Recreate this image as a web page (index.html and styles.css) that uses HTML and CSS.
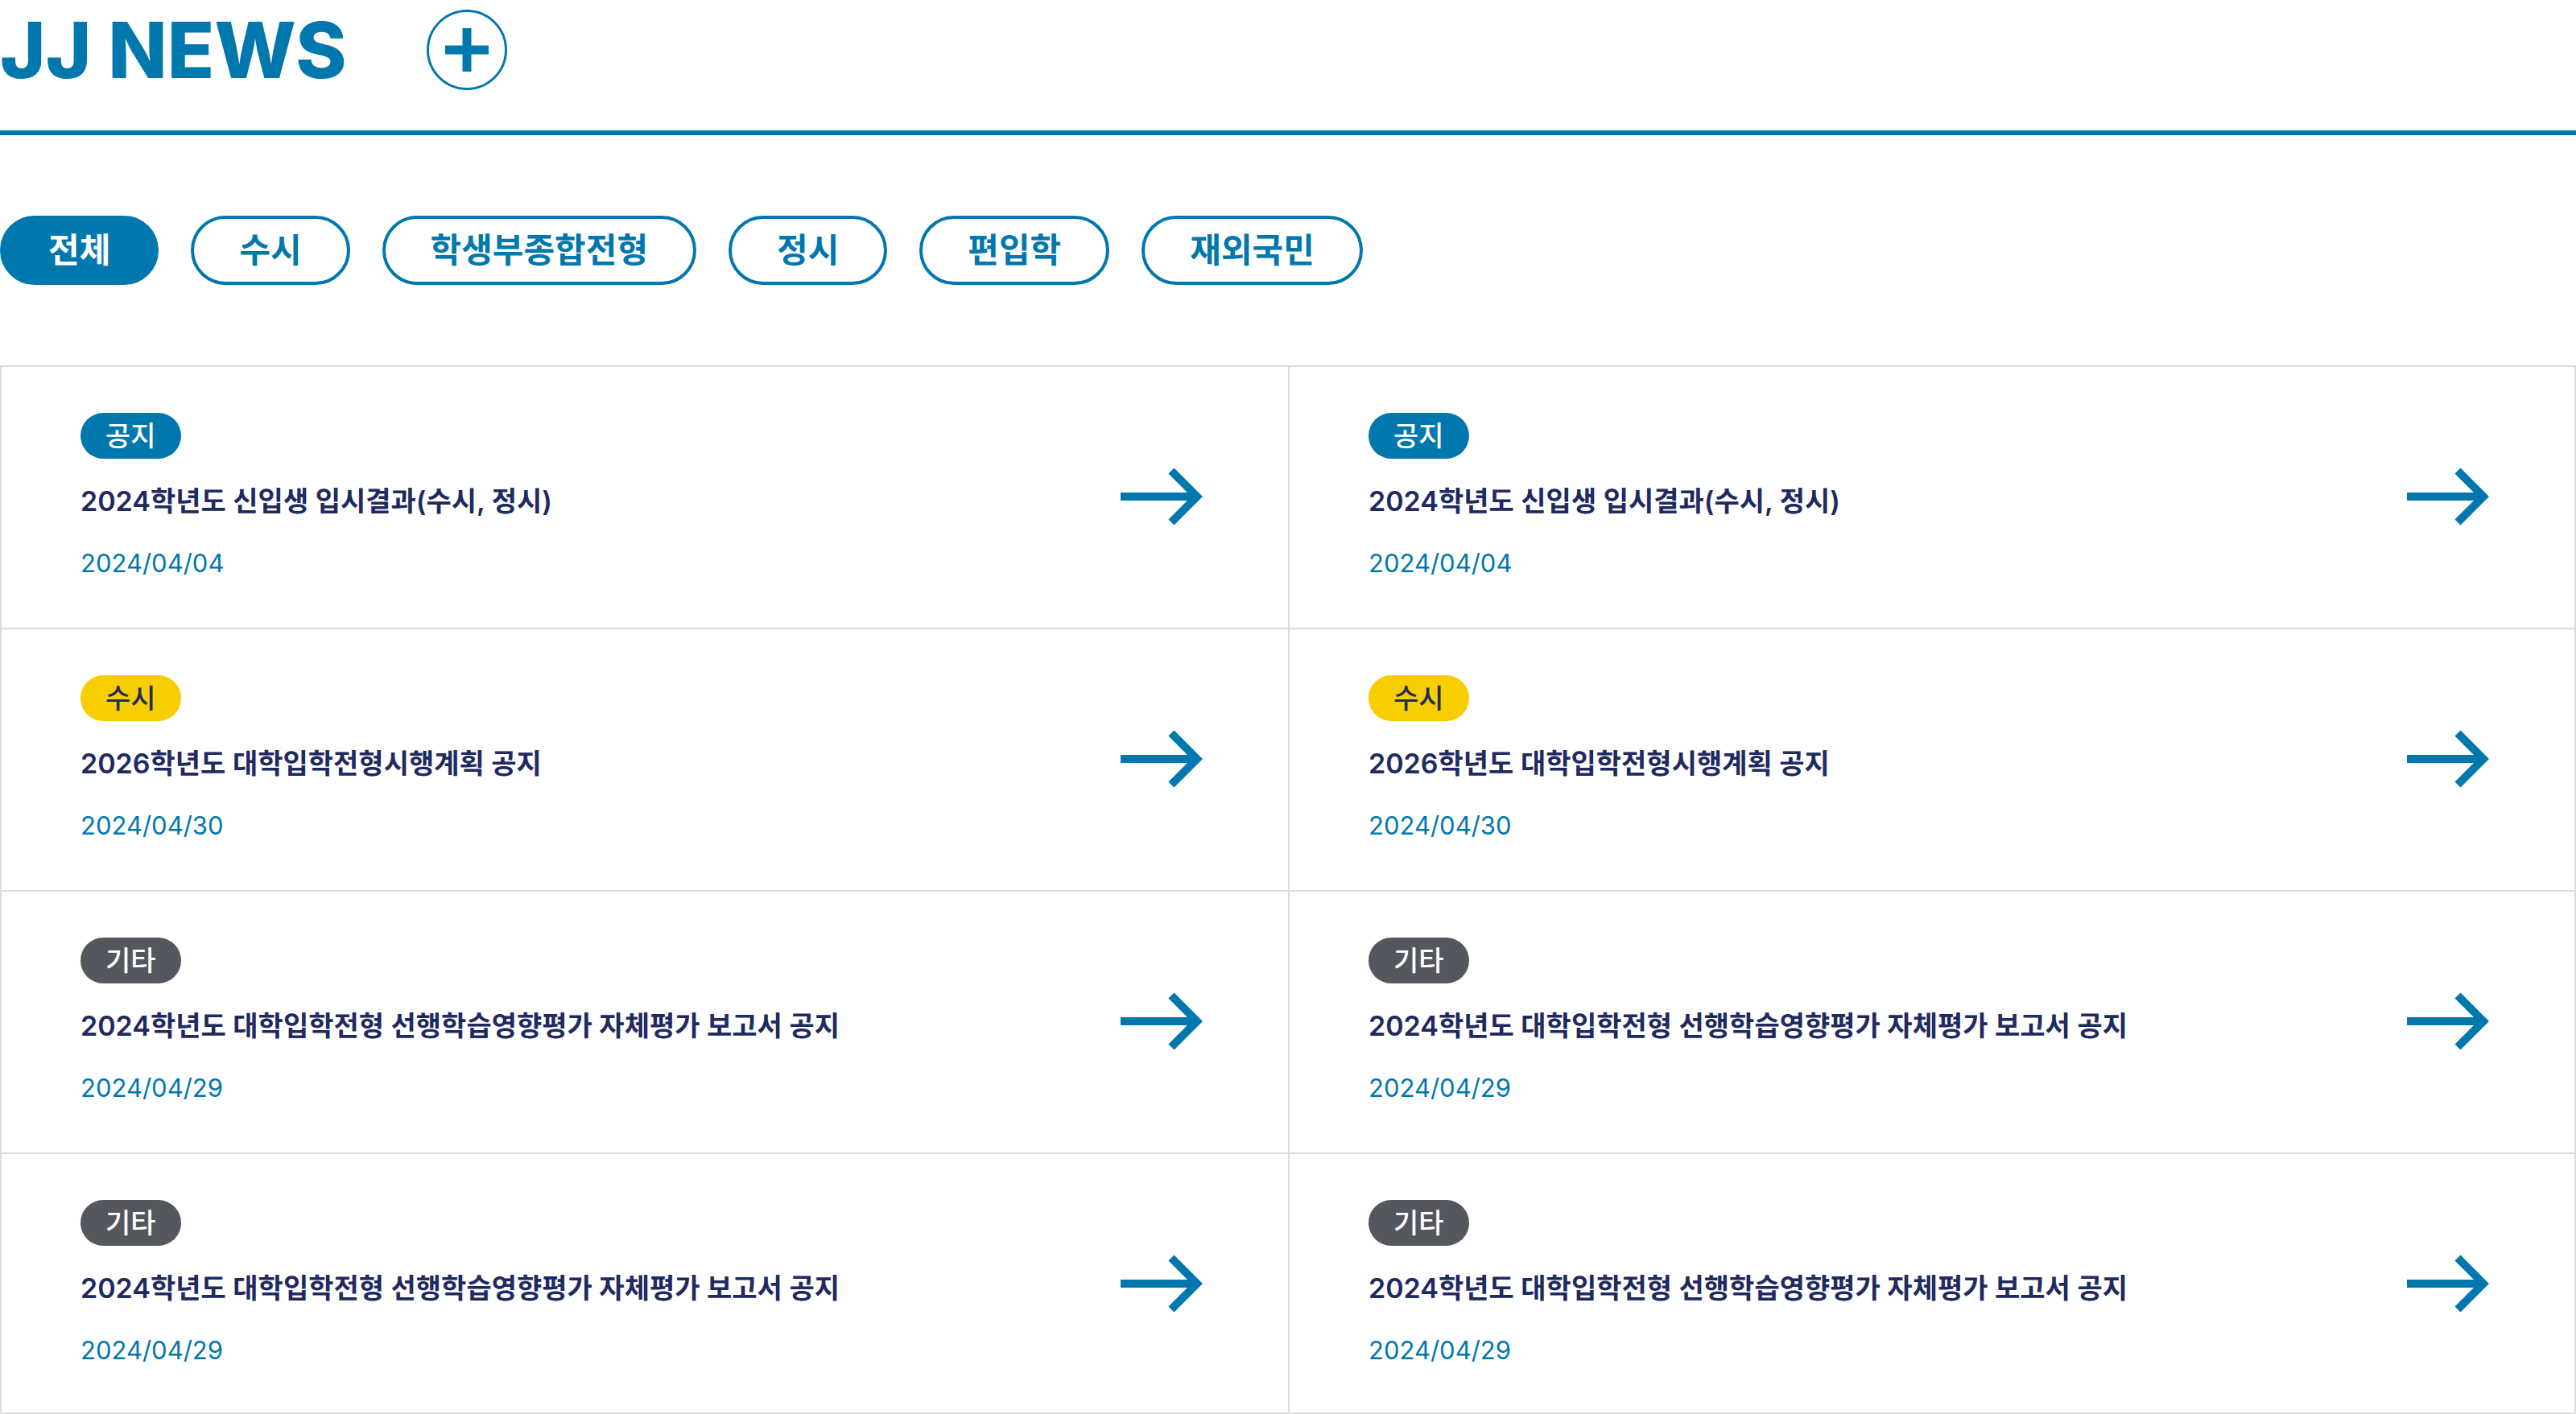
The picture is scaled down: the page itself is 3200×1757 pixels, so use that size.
FILE: index.html
```html
<!DOCTYPE html>
<html lang="ko">
<head>
<meta charset="utf-8">
<meta name="viewport" content="width=device-width, initial-scale=1">
<title>JJ NEWS</title>
<link rel="stylesheet" href="styles.css">
</head>
<body>
<svg class="sprite" aria-hidden="true">
  <symbol id="arrow" viewBox="0 0 102 72">
    <path d="M0 36H94M63 4L95 36L63 68" fill="none" stroke="currentColor" stroke-width="10"/>
  </symbol>
</svg>
<main class="news">
  <header class="news-header">
    <h1 class="news-title">JJ NEWS</h1>
    <a class="more" href="#" aria-label="더보기">
      <svg class="more-icon" viewBox="0 0 54 54" aria-hidden="true"><path d="M0 27H54M27 0V54" stroke="currentColor" stroke-width="11"/></svg>
    </a>
  </header>
  <nav class="tabs" aria-label="전형">
    <button class="tab tab-active" type="button">전체</button>
    <button class="tab" type="button">수시</button>
    <button class="tab" type="button">학생부종합전형</button>
    <button class="tab" type="button">정시</button>
    <button class="tab" type="button">편입학</button>
    <button class="tab" type="button">재외국민</button>
  </nav>
  <ul class="list">
    <li class="item"><a class="link" href="#"><span class="body"><span class="badge badge-notice">공지</span><strong class="subject">2024학년도 신입생 입시결과(수시, 정시)</strong><time class="date">2024/04/04</time></span><svg class="arrow" aria-hidden="true"><use href="#arrow"/></svg></a></li>
    <li class="item"><a class="link" href="#"><span class="body"><span class="badge badge-notice">공지</span><strong class="subject">2024학년도 신입생 입시결과(수시, 정시)</strong><time class="date">2024/04/04</time></span><svg class="arrow" aria-hidden="true"><use href="#arrow"/></svg></a></li>
    <li class="item"><a class="link" href="#"><span class="body"><span class="badge badge-early">수시</span><strong class="subject">2026학년도 대학입학전형시행계획 공지</strong><time class="date">2024/04/30</time></span><svg class="arrow" aria-hidden="true"><use href="#arrow"/></svg></a></li>
    <li class="item"><a class="link" href="#"><span class="body"><span class="badge badge-early">수시</span><strong class="subject">2026학년도 대학입학전형시행계획 공지</strong><time class="date">2024/04/30</time></span><svg class="arrow" aria-hidden="true"><use href="#arrow"/></svg></a></li>
    <li class="item"><a class="link" href="#"><span class="body"><span class="badge badge-etc">기타</span><strong class="subject">2024학년도 대학입학전형 선행학습영향평가 자체평가 보고서 공지</strong><time class="date">2024/04/29</time></span><svg class="arrow" aria-hidden="true"><use href="#arrow"/></svg></a></li>
    <li class="item"><a class="link" href="#"><span class="body"><span class="badge badge-etc">기타</span><strong class="subject">2024학년도 대학입학전형 선행학습영향평가 자체평가 보고서 공지</strong><time class="date">2024/04/29</time></span><svg class="arrow" aria-hidden="true"><use href="#arrow"/></svg></a></li>
    <li class="item"><a class="link" href="#"><span class="body"><span class="badge badge-etc">기타</span><strong class="subject">2024학년도 대학입학전형 선행학습영향평가 자체평가 보고서 공지</strong><time class="date">2024/04/29</time></span><svg class="arrow" aria-hidden="true"><use href="#arrow"/></svg></a></li>
    <li class="item"><a class="link" href="#"><span class="body"><span class="badge badge-etc">기타</span><strong class="subject">2024학년도 대학입학전형 선행학습영향평가 자체평가 보고서 공지</strong><time class="date">2024/04/29</time></span><svg class="arrow" aria-hidden="true"><use href="#arrow"/></svg></a></li>
  </ul>
</main>
</body>
</html>
```

FILE: styles.css
```css
:root {
  --blue: #0078ae;
  --navy: #1f2a60;
  --line: #dcdcdc;
}

* {
  box-sizing: border-box;
}

body {
  margin: 0;
  background: #fff;
  color: var(--navy);
  font-family: Inter, "Noto Sans CJK KR", sans-serif;
}

.sprite {
  position: absolute;
  width: 0;
  height: 0;
}

.news-header {
  display: flex;
  align-items: center;
  gap: 99px;
  padding: 12px 0 50px;
  border-bottom: 6px solid var(--blue);
  color: var(--blue);
}

.news-title {
  margin: 0;
  font-size: 96px;
  font-weight: 800;
  line-height: 100px;
}

.more {
  display: flex;
  align-items: center;
  justify-content: center;
  width: 100px;
  height: 100px;
  border: 3px solid var(--blue);
  border-radius: 50%;
  color: var(--blue);
}

.more-icon {
  width: 54px;
  height: 54px;
}

.tabs {
  display: flex;
  flex-wrap: wrap;
  gap: 40px;
  padding: 100px 0;
}

.tab {
  height: 86px;
  padding: 0 56px;
  border: 4px solid var(--blue);
  border-radius: 43px;
  background: #fff;
  color: var(--blue);
  font-family: inherit;
  font-size: 42px;
  font-weight: 700;
  line-height: 76px;
}

.tab-active {
  background: var(--blue);
  color: #fff;
}

.list {
  display: grid;
  grid-template-columns: 1fr 1fr;
  margin: 0;
  padding: 0;
  border: 2px solid var(--line);
  list-style: none;
}

.item {
  border-bottom: 2px solid var(--line);
}

.item:nth-child(even) {
  border-left: 2px solid var(--line);
}

.link {
  display: flex;
  align-items: center;
  justify-content: space-between;
  padding: 57px 106px 56px 98px;
  color: inherit;
  text-decoration: none;
}

.item:nth-last-child(-n+2) {
  border-bottom: 0;
}

.item:nth-last-child(-n+2) .link {
  padding-bottom: 53px;
}

.body {
  display: flex;
  flex-direction: column;
  align-items: flex-start;
  gap: 28px;
}

.badge {
  padding: 0 31px;
  border-radius: 29px;
  font-size: 34px;
  font-weight: 500;
  line-height: 57px;
}

.badge-notice {
  background: var(--blue);
  color: #fff;
}

.badge-early {
  background: #f8ce00;
}

.badge-etc {
  background: #55575f;
  color: #fff;
}

.subject {
  font-size: 34px;
  font-weight: 600;
  line-height: 50px;
}

.date {
  color: var(--blue);
  font-size: 31px;
  line-height: 48px;
}

.arrow {
  flex: none;
  width: 102px;
  height: 72px;
  margin-bottom: 4px;
  color: var(--blue);
}
```
